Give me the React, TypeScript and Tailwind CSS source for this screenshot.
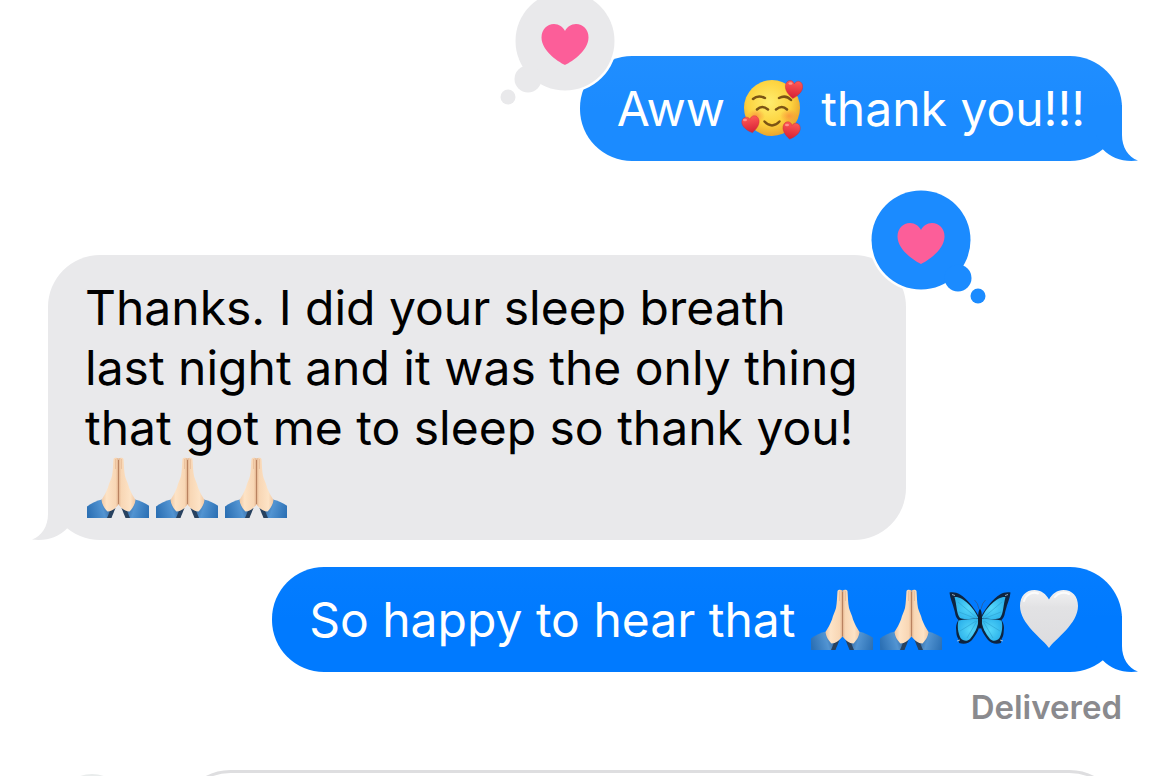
import type { ReactNode } from "react";
import { clsx } from "clsx";

const HEART_PATH =
  "M23.5 41C20 39.5 0 28 0 13.5C0 5.5 5.5 0 12.5 0C17.5 0 21.5 3 23.5 7C25.5 3 29.5 0 34.5 0C41.5 0 47 5.5 47 13.5C47 28 27 39.5 23.5 41Z";

function Emoji({ label, children }: { label: string; children: ReactNode }) {
  return (
    <svg
      role="img"
      aria-label={label}
      viewBox="0 0 62 62"
      className="-my-1 ml-0.5 mr-[5px] inline-block h-[62px] w-[62px] align-[-10px]"
    >
      {children}
    </svg>
  );
}

function PrayingHands() {
  const half = (
    <>
      <path d="M0 49.500C4 46.500 10 43.500 15 42.500L26 53L23.500 61H0Z" fill="url(#sleeve)" />
      <path d="M20 61C22 57 22 54.500 24 52.500L28.500 51C27 55 25.500 58 24.500 61Z" fill="#27415f" />
      <path
        d="M31.5 1.5C30 0.5 27 0.5 26.5 2C26 8 26 14 25 19C24 23 22 26 21 30.500C19 35.500 17 39 14.500 43C15 48 18 52 20.500 54.500C25 54.500 28 51.500 31.500 47.500Z"
        fill="url(#skin)"
      />
    </>
  );
  return (
    <Emoji label="Folded hands">
      <defs>
        <linearGradient id="sleeve" x1="0" x2="1" y1="0.6" y2="0.4">
          <stop offset="0" stopColor="#2c70b4" />
          <stop offset="0.6" stopColor="#5294d2" />
          <stop offset="1" stopColor="#2c5c92" />
        </linearGradient>
        <linearGradient id="skin" x1="0" x2="1" y1="0" y2="0">
          <stop offset="0" stopColor="#f0c8a4" />
          <stop offset="0.3" stopColor="#fde3c6" />
          <stop offset="0.85" stopColor="#f8d6b4" />
          <stop offset="1" stopColor="#dfae88" />
        </linearGradient>
      </defs>
      {half}
      <g transform="matrix(-1 0 0 1 63 0)">{half}</g>
      <path d="M31.5 3V47" stroke="#b98260" strokeWidth="1" />
      <path d="M28.5 2V12M34.5 2V12" stroke="#e2b48e" strokeWidth="0.6" />
    </Emoji>
  );
}

function SmilingFaceWithHearts() {
  return (
    <Emoji label="Smiling face with hearts">
      <defs>
        <radialGradient id="face" cx="0.45" cy="0.4" r="0.6">
          <stop offset="0" stopColor="#ffed6e" />
          <stop offset="0.65" stopColor="#fdd33f" />
          <stop offset="1" stopColor="#eba42c" />
        </radialGradient>
        <radialGradient id="blush">
          <stop offset="0" stopColor="#f98a3c" stopOpacity="0.75" />
          <stop offset="1" stopColor="#f98a3c" stopOpacity="0" />
        </radialGradient>
        <linearGradient id="redHeart" x1="0" x2="0" y1="0" y2="1">
          <stop offset="0" stopColor="#ff5a55" />
          <stop offset="1" stopColor="#d51f35" />
        </linearGradient>
      </defs>
      <circle cx="31" cy="30" r="28" fill="url(#face)" />
      <ellipse cx="15" cy="38" rx="9" ry="7" fill="url(#blush)" />
      <ellipse cx="48" cy="38" rx="9" ry="7" fill="url(#blush)" />
      <g fill="none" stroke="#7c5414" strokeWidth="2.500" strokeLinecap="round">
        <path d="M12 21Q17 16.500 24 20M38 20Q45 16.500 50 22" />
        <path d="M16 31.500Q21 26.500 27 31.500M35 31.500Q41 26.500 46 31.500" />
        <path d="M23.500 43.500Q31 51.500 38.500 43.500" />
      </g>
      <g fill="url(#redHeart)" stroke="#c62a35" strokeWidth="1">
        <path d={HEART_PATH} transform="translate(45 2) rotate(6) scale(0.37 0.43)" />
        <path d={HEART_PATH} transform="translate(0 40) rotate(-10) scale(0.37 0.4)" />
        <path d={HEART_PATH} transform="translate(43 43) rotate(10) scale(0.37 0.41)" />
      </g>
      <g fill="#ffa49c" opacity="0.8">
        <ellipse cx="49.500" cy="5.500" rx="2" ry="1.200" />
        <ellipse cx="4" cy="42" rx="2" ry="1.200" />
        <ellipse cx="46" cy="47" rx="2" ry="1.200" />
      </g>
    </Emoji>
  );
}

function Butterfly() {
  const wing = (
    <>
      <path
        d="M0.500 3.500C4 3 8 3.500 11 5.500C18 10 25 18 30 28L31 34C30.500 40 27 46 23 51C20 54.500 15 55.500 10 54L9.500 50C7 47 7.500 43 7 39C7 36 8 33 9.500 31C6 28 6.500 24 5 20C4 15 1 10 0.500 3.500Z"
        fill="#0e2440"
      />
      <path
        d="M5.500 8C13 7 25 18 29.500 29.500C22 29.500 15 31 11 29C7.500 25 8 17 5.500 8Z"
        fill="url(#wing)"
      />
      <path
        d="M9.500 31.500C15 30 23 30 29.500 30C29.500 38 25 45 21 50C18 53 14 52 11.500 49C9 44 8 37 9.500 31.500Z"
        fill="url(#wing)"
      />
      <path
        d="M28 29L9 13M28 30L10 23M27 32L11 42M28 32L18 49"
        stroke="#2b9fd0"
        strokeWidth="0.600"
      />
      <path d="M3 5.500L6 6.500M8 52L11 51" stroke="#b8cbd8" strokeWidth="0.800" />
    </>
  );
  return (
    <Emoji label="Butterfly">
      <defs>
        <radialGradient id="wing" cx="0.6" cy="0.5" r="0.6">
          <stop offset="0" stopColor="#55d7fa" />
          <stop offset="1" stopColor="#2fb4ec" />
        </radialGradient>
      </defs>
      {wing}
      <g transform="matrix(-1 0 0 1 62 0)">{wing}</g>
      <ellipse cx="31" cy="30" rx="2" ry="10" fill="#101c2c" />
      <path d="M30 20Q29 14 25.500 11M32 20Q33 14 36.500 11" fill="none" stroke="#2d5b94" strokeWidth="0.800" />
    </Emoji>
  );
}

function WhiteHeart() {
  return (
    <Emoji label="White heart">
      <defs>
        <linearGradient id="whiteHeart" x1="0" x2="0" y1="0" y2="1">
          <stop offset="0" stopColor="#f1f1f2" />
          <stop offset="0.3" stopColor="#e2e2e4" />
          <stop offset="1" stopColor="#dcdcdf" />
        </linearGradient>
      </defs>
      <path
        d="M31 59C25 50 2 35 2 17C2 7 8 1 16.500 1C23 1 28 5 31 10.500C34 5 39 1 45.500 1C54 1 60 7 60 17C60 35 37 50 31 59Z"
        fill="url(#whiteHeart)"
      />
      <path
        d="M6 12C8 5 15 2.500 20 4.500M37 8C40 4 46 2.500 51 5"
        fill="none"
        stroke="#fff"
        strokeWidth="2"
        strokeLinecap="round"
        opacity="0.8"
      />
    </Emoji>
  );
}

function Reaction({ sent }: { sent: boolean }) {
  return (
    <svg
      role="img"
      aria-label={sent ? "You loved this message" : "They loved this message"}
      viewBox="0 0 120 120"
      className={clsx(
        "absolute h-[120px] w-[120px]",
        sent ? "-right-20 -top-[68px] fill-[#1b8bff]" : "-left-20 -top-[68px] fill-[#e9e9eb]",
      )}
    >
      <g transform={sent ? "matrix(-1 0 0 1 120 0)" : undefined}>
        <circle cx="65" cy="53" r="52" fill="#fff" />
        <circle cx="65" cy="53" r="49.500" />
        <circle cx="28" cy="91" r="13.500" />
        <circle cx="8" cy="109" r="7.500" />
      </g>
      <path
        d={HEART_PATH}
        transform={sent ? "translate(31.500 36)" : "translate(41.500 36)"}
        fill="#fc5e99"
      />
    </svg>
  );
}

interface BubbleProps {
  sent?: boolean;
  tone: string;
  tailTone: string;
  reaction?: ReactNode;
  children: ReactNode;
}

function Bubble({ sent = false, tone, tailTone, reaction, children }: BubbleProps) {
  return (
    <div
      className={clsx(
        "relative w-fit rounded-[52px] pb-[22px] pl-[37px] pt-[23px] text-5xl leading-[60px]",
        sent ? "self-end pr-[37px] text-white" : "self-start pr-12 text-black",
        tone,
      )}
    >
      <svg
        aria-hidden="true"
        viewBox="0 0 42 56"
        className={clsx(
          "absolute bottom-0 h-14 w-[42px]",
          sent ? "-right-4" : "-left-4 -scale-x-100",
          tailTone,
        )}
      >
        <path d="M26 0V30C26 42 32 52 42 55.500C28 57.500 15 53 7 44.500L0 30V0Z" />
      </svg>
      <p className="relative">{children}</p>
      {reaction}
    </div>
  );
}

export default function App() {
  return (
    <div className="flex h-screen flex-col overflow-hidden bg-white font-['Inter','Liberation_Sans',sans-serif]">
      <main className="flex shrink-0 flex-col pl-12 pr-7 pt-14">
        <Bubble
          sent
          tone="bg-linear-to-b from-[#208eff] to-[#1b8bff] to-50%"
          tailTone="fill-[#1b8bff]"
          reaction={<Reaction sent={false} />}
        >
          Aww <SmilingFaceWithHearts /> thank you!!!
        </Bubble>

        <div className="mt-[94px] flex flex-col">
          <Bubble tone="bg-[#e9e9eb]" tailTone="fill-[#e9e9eb]" reaction={<Reaction sent />}>
            Thanks. I did your sleep breath
            <br />
            last night and it was the only thing
            <br />
            that got me to sleep so thank you!
            <br />
            <PrayingHands />
            <PrayingHands />
            <PrayingHands />
          </Bubble>
        </div>

        <div className="mt-[27px] flex flex-col">
          <Bubble
            sent
            tone="bg-linear-to-b from-[#057dff] to-[#007aff] to-50%"
            tailTone="fill-[#007aff]"
          >
            So happy to hear that <PrayingHands />
            <PrayingHands />
            <Butterfly />
            <WhiteHeart />
          </Bubble>
          <p className="mt-[15px] self-end text-[33px] font-semibold leading-10 text-[#8a8a8e]">
            Delivered
          </p>
        </div>
      </main>

      <form className="mt-[43px] flex shrink-0 items-center gap-[50px] pl-14 pr-7">
        <button
          type="button"
          aria-label="Add attachment"
          className="h-[98px] w-[72px] shrink-0 rounded-full bg-[#e9ecec]"
        />
        <input
          aria-label="Message"
          className="h-[105px] min-w-0 flex-1 rounded-full border-[3px] border-[#dedee0] bg-white px-9 text-5xl outline-none"
        />
      </form>
    </div>
  );
}
